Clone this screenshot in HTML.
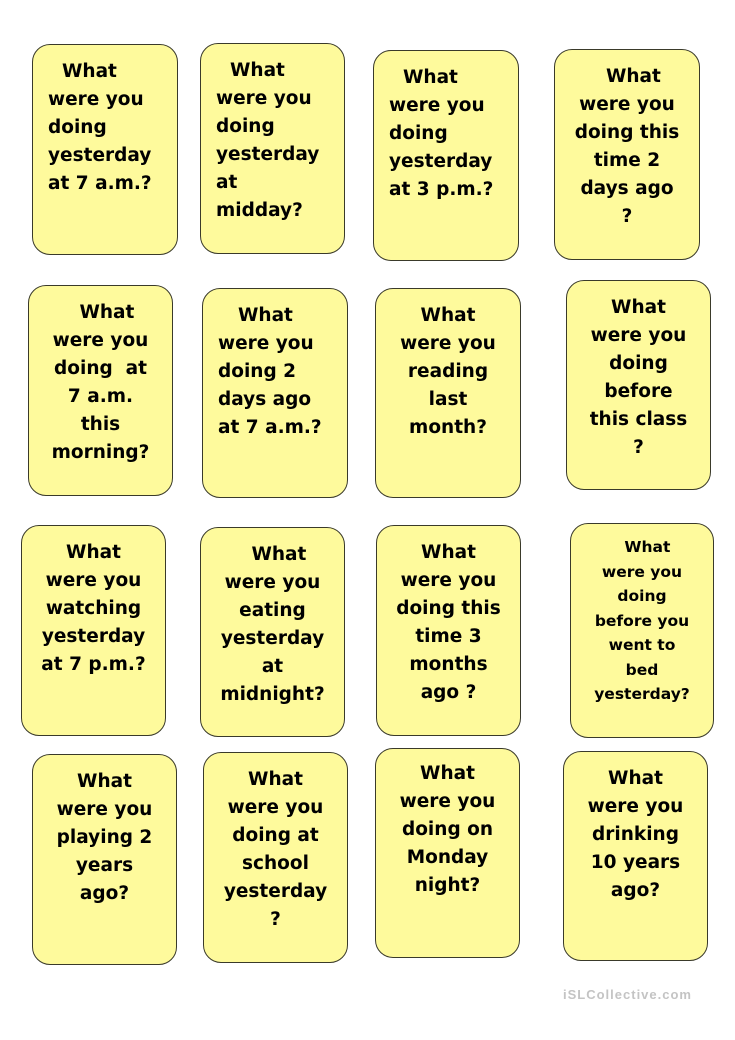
<!DOCTYPE html>
<html><head><meta charset="utf-8"><style>
body{margin:0;width:735px;height:1040px;background:#fff;position:relative;overflow:hidden;font-family:"Liberation Sans",Arial,sans-serif;}
.c{position:absolute;width:142px;height:208px;background:#fefa9c;border:1.5px solid #3a3a2a;border-radius:18px;box-sizing:border-box;font-family:"DejaVu Sans",sans-serif;font-weight:bold;font-size:18.5px;line-height:28px;color:#000;padding-top:13px;text-align:center;white-space:nowrap;}
.l{text-align:left;padding-left:15px;}
.w{margin-left:14px;}
.s{font-size:15.5px;line-height:24.5px;padding-top:11px;}
.wm{position:absolute;left:563px;top:987px;font-size:13px;letter-spacing:1px;font-weight:bold;color:#c4c4c4;}
</style></head><body>
<div class="c l" style="left:32px;top:44px;width:146px;height:211px"><span class="w">What</span><br>were you<br>doing<br>yesterday<br>at 7 a.m.?</div>
<div class="c l" style="left:200px;top:43px;width:145px;height:211px"><span class="w">What</span><br>were you<br>doing<br>yesterday<br>at<br>midday?</div>
<div class="c l" style="left:373px;top:50px;width:146px;height:211px"><span class="w">What</span><br>were you<br>doing<br>yesterday<br>at 3 p.m.?</div>
<div class="c" style="left:554px;top:49px;width:146px;height:211px">&nbsp;&nbsp;What<br>were you<br>doing this<br>time 2<br>days ago<br>?</div>

<div class="c" style="left:28px;top:285px;width:145px;height:211px">&nbsp;&nbsp;What<br>were you<br>doing&nbsp; at<br>7 a.m.<br>this<br>morning?</div>
<div class="c l" style="left:202px;top:288px;width:146px;height:210px"><span class="w" style="margin-left:20px">What</span><br>were you<br>doing 2<br>days ago<br>at 7 a.m.?</div>
<div class="c" style="left:375px;top:288px;width:146px;height:210px">What<br>were you<br>reading<br>last<br>month?</div>
<div class="c" style="left:566px;top:280px;width:145px;height:210px">What<br>were you<br>doing<br>before<br>this class<br>?</div>

<div class="c" style="left:21px;top:525px;width:145px;height:211px">What<br>were you<br>watching<br>yesterday<br>at 7 p.m.?</div>
<div class="c" style="left:200px;top:527px;width:145px;height:210px">&nbsp;&nbsp;What<br>were you<br>eating<br>yesterday<br>at<br>midnight?</div>
<div class="c" style="left:376px;top:525px;width:145px;height:211px">What<br>were you<br>doing this<br>time 3<br>months<br>ago ?</div>
<div class="c s" style="left:570px;top:523px;width:144px;height:215px">&nbsp;&nbsp;What<br>were you<br>doing<br>before you<br>went to<br>bed<br>yesterday?</div>

<div class="c" style="left:32px;top:754px;width:145px;height:211px">What<br>were you<br>playing 2<br>years<br>ago?</div>
<div class="c" style="left:203px;top:752px;width:145px;height:211px">What<br>were you<br>doing at<br>school<br>yesterday<br>?</div>
<div class="c" style="left:375px;top:748px;width:145px;height:210px;padding-top:11px">What<br>were you<br>doing on<br>Monday<br>night?</div>
<div class="c" style="left:563px;top:751px;width:145px;height:210px">What<br>were you<br>drinking<br>10 years<br>ago?</div>
<div class="wm">iSLCollective.com</div>
</body></html>
